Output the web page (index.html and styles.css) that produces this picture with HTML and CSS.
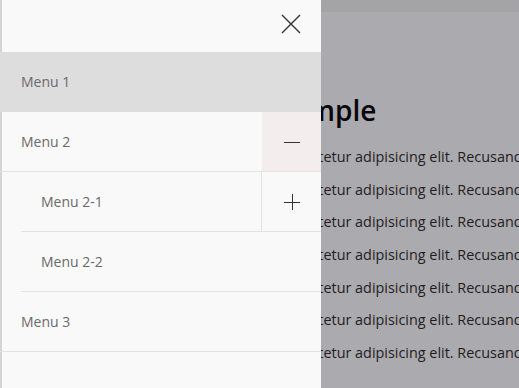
FILE: index.html
```html
<!DOCTYPE html>
<html lang="en">
<head>
    <meta charset="UTF-8">
    <meta name="viewport" content="width=device-width, initial-scale=1.0">
    <title>Drawer menu example</title>
    <link rel="stylesheet" href="styles.css">
</head>
<body>
    <div class="page">
        <div class="topbar"></div>
        <div class="content">
            <h1>Example</h1>
            <p>Lorem ipsum dolor sit amet, consectetur adipisicing elit. Recusandae, quaerat.</p>
            <p>Lorem ipsum dolor sit amet, consectetur adipisicing elit. Recusandae, quaerat.</p>
            <p>Lorem ipsum dolor sit amet, consectetur adipisicing elit. Recusandae, quaerat.</p>
            <p>Lorem ipsum dolor sit amet, consectetur adipisicing elit. Recusandae, quaerat.</p>
            <p>Lorem ipsum dolor sit amet, consectetur adipisicing elit. Recusandae, quaerat.</p>
            <p>Lorem ipsum dolor sit amet, consectetur adipisicing elit. Recusandae, quaerat.</p>
            <p>Lorem ipsum dolor sit amet, consectetur adipisicing elit. Recusandae, quaerat.</p>
        </div>
    </div>

    <nav class="drawer">
        <div class="drawer-head">
            <button class="close-btn" aria-label="Close">
                <svg width="20" height="20" viewBox="0 0 20 20">
                    <path d="M1 1 L19 19 M19 1 L1 19" stroke="#333" stroke-width="1.4" fill="none"/>
                </svg>
            </button>
        </div>
        <ul class="menu">
            <li class="item active"><a href="#">Menu 1</a></li>
            <li class="item">
                <div class="row">
                    <a href="#">Menu 2</a>
                    <button class="toggle open" aria-label="Collapse">
                        <svg width="16" height="16" viewBox="0 0 16 16">
                            <path d="M0 8.5 H16" stroke="#333" stroke-width="1" fill="none"/>
                        </svg>
                    </button>
                </div>
                <ul class="submenu">
                    <li class="item">
                        <div class="row">
                            <a href="#">Menu 2-1</a>
                            <button class="toggle" aria-label="Expand">
                                <svg width="16" height="16" viewBox="0 0 16 16">
                                    <path d="M0 8.5 H16 M8.5 0 V16" stroke="#333" stroke-width="1" fill="none"/>
                                </svg>
                            </button>
                        </div>
                    </li>
                    <li class="item"><a href="#">Menu 2-2</a></li>
                </ul>
            </li>
            <li class="item"><a href="#">Menu 3</a></li>
        </ul>
    </nav>
</body>
</html>
```

FILE: styles.css
```css
html, body {
    margin: 0;
    padding: 0;
    height: 100%;
    overflow: hidden;
}
body {
    font-family: "Open Sans", "DejaVu Sans", sans-serif;
    background: #abaaae;
}
.page {
    height: 100%;
}
.topbar {
    height: 12px;
    background: #a4a4a6;
}
.content {
    padding-left: 79px;
    color: #1f1d22;
    white-space: nowrap;
}
.content h1 {
    margin: 0 0 0 182px;
    padding-top: 79px;
    font-size: 28px;
    font-weight: 600;
    line-height: 38px;
    color: #08070a;
}
.content p {
    margin: 0;
    font-size: 14.4px;
    line-height: 32.67px;
}
.content h1 + p {
    margin-top: 12px;
}

/* drawer */
.drawer {
    position: fixed;
    top: 0;
    left: 0;
    bottom: 0;
    width: 321px;
    background: #f9f9f9;
    box-shadow: inset 2px 0 0 #d4d4d4;
}
.drawer-head {
    height: 52px;
    display: flex;
    justify-content: flex-end;
}
.close-btn {
    width: 60px;
    height: 47px;
    border: none;
    background: none;
    padding: 0;
    display: flex;
    align-items: center;
    justify-content: center;
    cursor: pointer;
}
.menu, .submenu {
    list-style: none;
    margin: 0;
    padding: 0;
}
.menu > .item {
    border-bottom: 1px solid #e2e2e2;
}
.menu > .item.active {
    background: #dddddd;
    border-bottom-color: #dddddd;
}
.menu > .item:has(.submenu) {
    border-bottom: none;
}
.menu > .item > .row {
    border-bottom: 1px solid #e2e2e2;
}
.item a {
    display: block;
    flex: 1;
    height: 59px;
    line-height: 59px;
    padding-left: 21px;
    font-size: 14px;
    color: #6a6a6a;
    text-decoration: none;
}
.row {
    display: flex;
}
.submenu {
    margin-left: 21px;
}
.submenu .item {
    border-bottom: 1px solid #e2e2e2;
}
.submenu .item a {
    padding-left: 20px;
}
.toggle {
    width: 60px;
    height: 59px;
    border: none;
    border-left: 1px solid #e2e2e2;
    background: none;
    padding: 0;
    display: flex;
    align-items: center;
    justify-content: center;
    cursor: pointer;
}
.toggle.open {
    background: #f4eded;
    border-left: none;
    width: 59px;
}
```
